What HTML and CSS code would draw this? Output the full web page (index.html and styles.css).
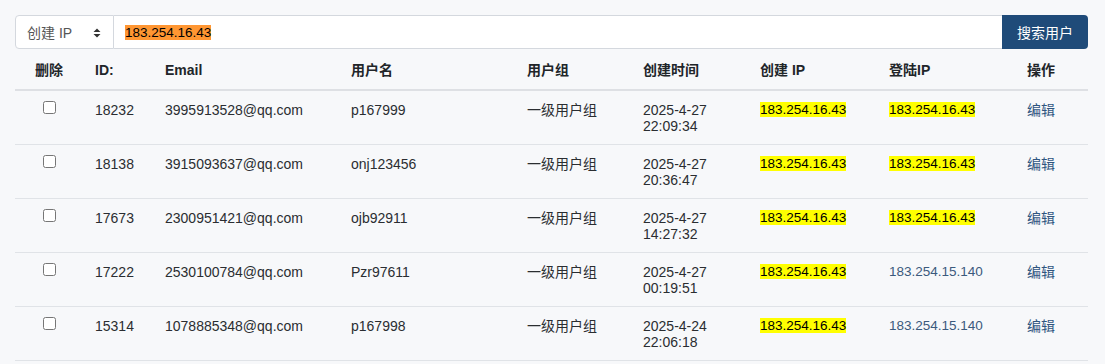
FILE: index.html
```html
<!DOCTYPE html>
<html lang="zh-CN">
<head>
<meta charset="utf-8">
<title>用户搜索</title>
<link rel="stylesheet" href="styles.css">
</head>
<body>
<div class="page">
  <form class="search">
    <div class="search-select">
      <span>创建 IP</span>
      <svg class="updown" width="8" height="10" viewBox="0 0 8 10"><path d="M4 0.5 L7.5 4 L0.5 4 Z M4 9.5 L7.5 6 L0.5 6 Z" fill="#333"/></svg>
    </div>
    <div class="search-input"><span class="search-hl">183.254.16.43</span></div>
    <button type="button" class="search-btn">搜索用户</button>
  </form>
  <table class="users">
    <colgroup>
      <col class="w-del"><col class="w-id"><col class="w-email"><col class="w-name"><col class="w-group"><col class="w-time"><col class="w-cip"><col class="w-lip"><col class="w-op">
    </colgroup>
    <thead>
      <tr><th class="center">删除</th><th>ID:</th><th>Email</th><th>用户名</th><th>用户组</th><th>创建时间</th><th>创建 IP</th><th>登陆IP</th><th>操作</th></tr>
    </thead>
    <tbody>
      <tr>
        <td class="center"><input type="checkbox" class="chk"></td>
        <td>18232</td><td>3995913528@qq.com</td><td>p167999</td><td>一级用户组</td>
        <td>2025-4-27<br>22:09:34</td>
        <td class="ip"><span class="hl">183.254.16.43</span></td>
        <td class="ip"><span class="hl">183.254.16.43</span></td>
        <td><a class="edit">编辑</a></td>
      </tr>
      <tr>
        <td class="center"><input type="checkbox" class="chk"></td>
        <td>18138</td><td>3915093637@qq.com</td><td>onj123456</td><td>一级用户组</td>
        <td>2025-4-27<br>20:36:47</td>
        <td class="ip"><span class="hl">183.254.16.43</span></td>
        <td class="ip"><span class="hl">183.254.16.43</span></td>
        <td><a class="edit">编辑</a></td>
      </tr>
      <tr>
        <td class="center"><input type="checkbox" class="chk"></td>
        <td>17673</td><td>2300951421@qq.com</td><td>ojb92911</td><td>一级用户组</td>
        <td>2025-4-27<br>14:27:32</td>
        <td class="ip"><span class="hl">183.254.16.43</span></td>
        <td class="ip"><span class="hl">183.254.16.43</span></td>
        <td><a class="edit">编辑</a></td>
      </tr>
      <tr>
        <td class="center"><input type="checkbox" class="chk"></td>
        <td>17222</td><td>2530100784@qq.com</td><td>Pzr97611</td><td>一级用户组</td>
        <td>2025-4-27<br>00:19:51</td>
        <td class="ip"><span class="hl">183.254.16.43</span></td>
        <td class="ip ip-plain">183.254.15.140</td>
        <td><a class="edit">编辑</a></td>
      </tr>
      <tr>
        <td class="center"><input type="checkbox" class="chk"></td>
        <td>15314</td><td>1078885348@qq.com</td><td>p167998</td><td>一级用户组</td>
        <td>2025-4-24<br>22:06:18</td>
        <td class="ip"><span class="hl">183.254.16.43</span></td>
        <td class="ip ip-plain">183.254.15.140</td>
        <td><a class="edit">编辑</a></td>
      </tr>
    </tbody>
  </table>
</div>
</body>
</html>
```

FILE: styles.css
```css
* { box-sizing: border-box; }
html, body {
  margin: 0;
  background: #f7f8fa;
}
body {
  font-family: "Liberation Sans", "Noto Sans CJK SC", sans-serif;
  font-size: 14px;
  color: #212529;
}
.page {
  padding: 15px 17px 0 15px;
}
.search {
  display: flex;
  height: 34px;
  margin: 0 0 3px 0;
  width: 1073px;
}
.search-select {
  width: 99px;
  display: flex;
  align-items: center;
  justify-content: space-between;
  padding: 0 12px 0 11px;
  background: #fff;
  border: 1px solid #d4d8de;
  border-radius: 4px 0 0 4px;
  color: #555;
  font-size: 14px;
}
.updown { display: block; margin-top: 1px; }
.search-input {
  flex: 1;
  display: flex;
  align-items: center;
  padding: 0 11px;
  background: #fff;
  border: 1px solid #d4d8de;
  border-left: none;
  border-right: none;
  font-size: 13.5px;
  color: #000;
}
.search-hl {
  background: #ff9632;
  color: #000;
  line-height: 15px;
  margin-top: 1px;
}
.search-btn {
  width: 86px;
  border: none;
  border-radius: 0 4px 4px 0;
  background: #1f4b79;
  color: #fff;
  font-family: inherit;
  font-size: 14px;
  padding: 0;
}
.users {
  border-collapse: collapse;
  table-layout: fixed;
  width: 1073px;
}
.w-del { width: 68px; }
.w-id { width: 70px; }
.w-email { width: 186px; }
.w-name { width: 176px; }
.w-group { width: 116px; }
.w-time { width: 117px; }
.w-cip { width: 129px; }
.w-lip { width: 138px; }
.w-op { width: 73px; }
.users th,
.users td {
  text-align: left;
  vertical-align: top;
  padding: 11px 12px 10px 12px;
  line-height: 16px;
}
.users th {
  font-weight: bold;
  color: #212529;
  border-bottom: 2px solid #dee0e4;
  padding-top: 10px;
  padding-bottom: 11px;
}
.users td {
  border-bottom: 1px solid #e0e3e7;
  color: #2a2d31;
}
.users .center { text-align: center; }
.chk {
  display: block;
  width: 13px;
  height: 13px;
  margin: -1px auto 0;
}
.users td.ip { font-size: 13.5px; }
.hl {
  background: #ffff00;
  color: #000;
}
.users td.ip-plain { color: #3b5a7d; }
.edit {
  color: #2f557f;
  text-decoration: none;
}
```
